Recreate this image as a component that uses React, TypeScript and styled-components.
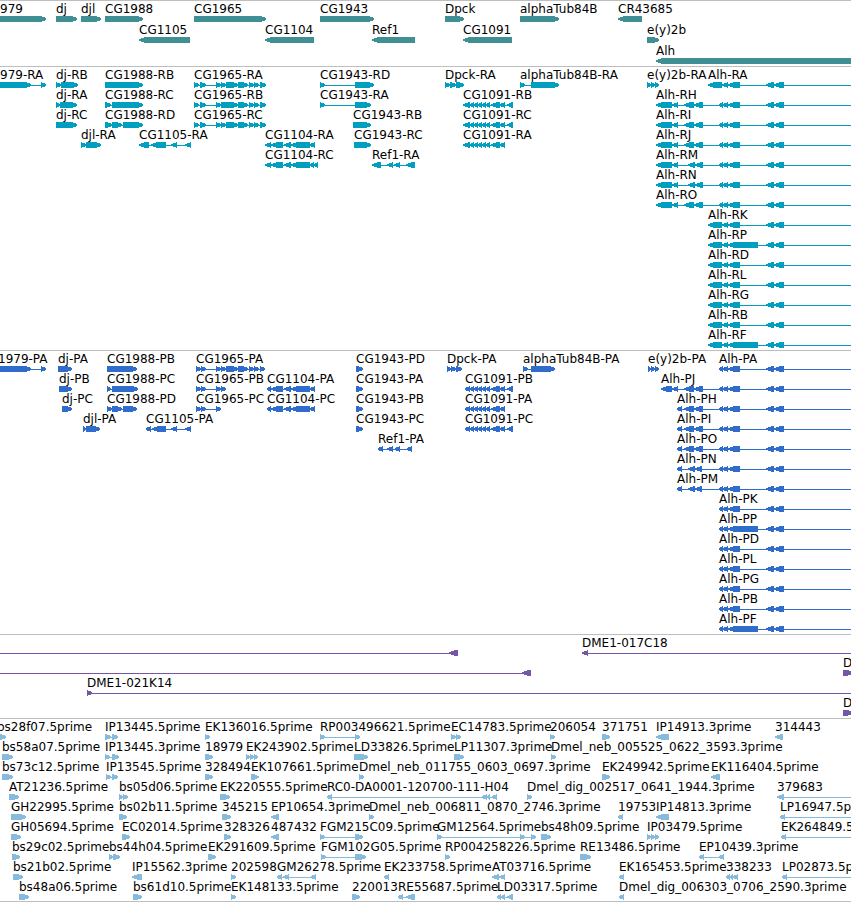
import React from "react";
import styled, { createGlobalStyle } from "styled-components";

const GlobalStyle = createGlobalStyle`
  body {
    margin: 0;
    background: #ffffff;
    color: #000000;
    font-family: "DejaVu Sans", Verdana, sans-serif;
    font-size: 12px;
  }
`;

const Browser = styled.main`
  overflow: hidden;
  border-bottom: 1px solid #bebebe;
`;

const Track = styled.section<{ $color: string; $gap?: number; $end?: number }>`
  display: flex;
  flex-direction: column;
  gap: ${(p) => p.$gap ?? 0}px;
  padding: 1px 0 ${(p) => p.$end ?? 2}px;
  border-top: 1px solid #bebebe;
  color: ${(p) => p.$color};
`;

const Lane = styled.div`
  position: relative;
  height: 20px;
`;

/* A feature sits at its own place along the sequence. */
const FeatureBox = styled.div`
  position: absolute;
  top: 0;
  display: flex;
  flex-direction: column;
`;

const Label = styled.span`
  height: 14px;
  line-height: 14px;
  color: #000000;
  white-space: nowrap;
`;

const Glyph = styled.svg`
  display: block;
  height: 6px;
  fill: currentColor;
  shape-rendering: crispEdges;
`;

type Strand = "+" | "-";
/* name, strand, [start, end, start, end, ...], where the line ends, where it starts */
type FeatureData = [string, Strand, number[], number?, number?];

const EDGE = 2400;
const HEAD = 6;

function exonPoints(start: number, end: number, strand: Strand) {
  const head = Math.min(HEAD, end - start);
  return strand === "+"
    ? `${start},0 ${end - head},0 ${end},2 ${end},4 ${end - head},6 ${start},6`
    : `${end},0 ${start + head},0 ${start},2 ${start},4 ${start + head},6 ${end},6`;
}

function Feature({ data }: { data: FeatureData }) {
  const [name, strand, spans, lineEnd, lineStart] = data;
  const start = lineStart ?? spans[0];
  const end = lineEnd ?? spans[spans.length - 1];
  const exons: [number, number][] = [];
  for (let i = 0; i < spans.length; i += 2) {
    exons.push([spans[i] - start, spans[i + 1] - start]);
  }
  const hasLine = exons.length > 1 || lineEnd !== undefined || lineStart !== undefined;
  return (
    <FeatureBox style={{ left: start }}>
      <Label>{name}</Label>
      <Glyph width={end - start} height={6} aria-hidden="true">
        {hasLine && <rect x={1} y={3} width={end - start - 2} height={1} />}
        {exons.map(([a, b]) => (
          <polygon key={a} points={exonPoints(a, b, strand)} />
        ))}
      </Glyph>
    </FeatureBox>
  );
}

const genes: FeatureData[][] = [
  [
    ["979", "+", [0, 46]],
    ["dj", "+", [56, 77]],
    ["djl", "+", [81, 101]],
    ["CG1988", "+", [105, 143]],
    ["CG1965", "+", [194, 266]],
    ["CG1943", "+", [320, 374]],
    ["Dpck", "+", [445, 464]],
    ["alphaTub84B", "+", [520, 559]],
    ["CR43685", "-", [618, 642]],
  ],
  [
    ["CG1105", "-", [139, 190]],
    ["CG1104", "-", [265, 314]],
    ["Ref1", "-", [372, 415]],
    ["CG1091", "-", [463, 512]],
    ["e(y)2b", "+", [647, 659]],
  ],
  [["Alh", "-", [656, EDGE]]],
];

const alhCore = [719, 723, 723, 728, 728, 740, 766, 774, 774, 784];
const alhLongCore = [719, 723, 723, 728, 728, 758, 766, 774, 774, 784];
const alhShort = [708, 722, 722, 728, 728, 740, 766, 774, 774, 784];
const alhShortLong = [708, 722, 722, 728, 728, 758, 766, 774, 774, 784];
const alhWide = [656, 672, 672, 678, 684, 694, 694, 703, ...alhCore];
const alhNarrow = [656, 672, 672, 678, 688, 695, 695, 703, ...alhCore];
const cg1965Tail = [238, 248, 249, 254, 254, 259, 260, 266];
const cg1104Mid = [271, 283, 284, 291, 291, 310];
const cg1091Mid = [470, 474, 474, 478, 478, 482, 482, 486, 486, 490, 491, 500, 500, 505];

const transcripts: FeatureData[][] = [
  [
    ["979-RA", "+", [0, 31, 41, 46]],
    ["dj-RB", "+", [56, 61, 61, 78]],
    ["CG1988-RB", "+", [105, 143]],
    ["CG1965-RA", "+", [194, 199, 200, 206, 216, 221, 221, 226, 226, 238, ...cg1965Tail]],
    ["CG1943-RD", "+", [320, 325, 355, 374]],
    ["Dpck-RA", "+", [445, 450, 450, 456, 456, 464]],
    ["alphaTub84B-RA", "+", [520, 525, 531, 559]],
    ["e(y)2b-RA", "+", [647, 651, 651, 655, 655, 659]],
    ["Alh-RA", "-", alhShort, EDGE],
  ],
  [
    ["dj-RA", "+", [56, 60, 60, 77]],
    ["CG1988-RC", "+", [105, 111, 112, 143]],
    ["CG1965-RB", "+", [194, 199, 200, 206, 216, 221, 221, 238, ...cg1965Tail]],
    ["CG1943-RA", "+", [320, 325, 355, 371]],
    ["CG1091-RB", "-", [463, 470, ...cg1091Mid, 507, 513]],
    ["Alh-RH", "-", alhWide, EDGE],
  ],
  [
    ["dj-RC", "+", [56, 77]],
    ["CG1988-RD", "+", [105, 112, 112, 122, 123, 143]],
    ["CG1965-RC", "+", [194, 199, 200, 206, 216, 221, 221, 226, 226, 238, ...cg1965Tail]],
    ["CG1943-RB", "+", [353, 371]],
    ["CG1091-RC", "-", [463, 470, ...cg1091Mid, 507, 513]],
    ["Alh-RI", "-", alhWide, EDGE],
  ],
  [
    ["djl-RA", "+", [81, 86, 86, 101]],
    ["CG1105-RA", "-", [139, 149, 151, 166, 171, 177, 185, 191]],
    ["CG1104-RA", "-", [265, 271, ...cg1104Mid, 310, 315]],
    ["CG1943-RC", "+", [354, 371]],
    ["CG1091-RA", "-", [463, 470, ...cg1091Mid]],
    ["Alh-RJ", "-", alhWide, EDGE],
  ],
  [
    ["CG1104-RC", "-", [265, 271, ...cg1104Mid, 310, 314, 314, 318]],
    ["Ref1-RA", "-", [372, 381, 387, 393, 394, 400, 406, 415]],
    ["Alh-RM", "-", alhNarrow, EDGE],
  ],
  [["Alh-RN", "-", alhNarrow, EDGE]],
  [["Alh-RO", "-", alhWide, EDGE]],
  [["Alh-RK", "-", alhShort, EDGE]],
  [["Alh-RP", "-", alhShortLong, EDGE]],
  [["Alh-RD", "-", alhShort, EDGE]],
  [["Alh-RL", "-", alhShort, EDGE]],
  [["Alh-RG", "-", alhShort, EDGE]],
  [["Alh-RB", "-", alhShort, EDGE]],
  [["Alh-RF", "-", alhShortLong, EDGE]],
];

const alhPH = [677, 682, 684, 694, 694, 703, ...alhCore];
const alhPN = [677, 682, 688, 695, 695, 702, ...alhCore];

const proteins: FeatureData[][] = [
  [
    ["1979-PA", "+", [-2, 31, 41, 46]],
    ["dj-PA", "+", [58, 72]],
    ["CG1988-PB", "+", [107, 137]],
    ["CG1965-PA", "+", [196, 201, 201, 206, 216, 221, 221, 226, 226, 238, 238, 248, 249, 254, 254, 259, 260, 265]],
    ["CG1943-PD", "+", [356, 363]],
    ["Dpck-PA", "+", [447, 451, 451, 456, 456, 462]],
    ["alphaTub84B-PA", "+", [523, 528, 531, 555]],
    ["e(y)2b-PA", "+", [648, 651, 651, 655, 655, 659]],
    ["Alh-PA", "-", alhCore, EDGE],
  ],
  [
    ["dj-PB", "+", [59, 72]],
    ["CG1988-PC", "+", [107, 111, 112, 138]],
    ["CG1965-PB", "+", [196, 201, 201, 206, 216, 221, 221, 226]],
    ["CG1104-PA", "-", [267, 271, ...cg1104Mid, 310, 315]],
    ["CG1943-PA", "+", [356, 363]],
    ["CG1091-PB", "-", [465, 470, ...cg1091Mid, 507, 513]],
    ["Alh-PJ", "-", [661, 672, 672, 678, 684, 694, 694, 703, ...alhCore], EDGE],
  ],
  [
    ["dj-PC", "+", [62, 72]],
    ["CG1988-PD", "+", [107, 112, 112, 122, 123, 137]],
    ["CG1965-PC", "+", [196, 201, 201, 206, 216, 221]],
    ["CG1104-PC", "-", [267, 271, ...cg1104Mid, 310, 315]],
    ["CG1943-PB", "+", [356, 363]],
    ["CG1091-PA", "-", [465, 470, ...cg1091Mid]],
    ["Alh-PH", "-", alhPH, EDGE],
  ],
  [
    ["djl-PA", "+", [83, 86, 86, 100]],
    ["CG1105-PA", "-", [146, 151, 152, 166, 171, 177, 185, 191]],
    ["CG1943-PC", "+", [356, 363]],
    ["CG1091-PC", "-", [465, 470, ...cg1091Mid, 507, 513]],
    ["Alh-PI", "-", alhPH, EDGE],
  ],
  [
    ["Ref1-PA", "-", [378, 383, 387, 393, 395, 400, 407, 412]],
    ["Alh-PO", "-", alhPH, EDGE],
  ],
  [["Alh-PN", "-", alhPN, EDGE]],
  [["Alh-PM", "-", alhPN, EDGE]],
  [["Alh-PK", "-", alhCore, EDGE]],
  [["Alh-PP", "-", alhLongCore, EDGE]],
  [["Alh-PD", "-", alhCore, EDGE]],
  [["Alh-PL", "-", alhCore, EDGE]],
  [["Alh-PG", "-", alhCore, EDGE]],
  [["Alh-PB", "-", alhCore, EDGE]],
  [["Alh-PF", "-", alhLongCore, EDGE]],
];

const clones: FeatureData[][] = [
  [
    ["", "-", [449, 458], 458, -20],
    ["DME1-017C18", "-", [582, 588], EDGE],
  ],
  [
    ["", "-", [522, 531], 531, -20],
    ["D", "+", [843, 853]],
  ],
  [["DME1-021K14", "+", [87, 92], EDGE]],
  [["D", "+", [843, 853]]],
];

const ests: FeatureData[][] = [
  [
    ["bs28f07.5prime", "+", [-3, 6]],
    ["IP13445.5prime", "+", [105, 111, 112, 118]],
    ["EK136016.5prime", "+", [205, 210]],
    ["RP003496621.5prime", "+", [320, 325, 355, 360]],
    ["EC14783.5prime", "+", [451, 456, 456, 461]],
    ["206054", "+", [550, 555]],
    ["371751", "+", [602, 610]],
    ["IP14913.3prime", "-", [656, 669]],
    ["314443", "-", [775, 783]],
  ],
  [
    ["bs58a07.5prime", "+", [2, 13]],
    ["IP13445.3prime", "+", [105, 110, 112, 119]],
    ["18979", "+", [205, 213]],
    ["EK243902.5prime", "+", [246, 250, 250, 254, 254, 258]],
    ["LD33826.5prime", "+", [354, 368]],
    ["LP11307.3prime", "+", [454, 464]],
    ["Dmel_neb_005525_0622_3593.3prime", "+", [551, 556]],
  ],
  [
    ["bs73c12.5prime", "+", [2, 13]],
    ["IP13545.5prime", "+", [106, 111, 112, 118]],
    ["328494", "+", [205, 213]],
    ["EK107661.5prime", "+", [251, 259]],
    ["Dmel_neb_011755_0603_0697.3prime", "+", [359, 364]],
    ["EK249942.5prime", "+", [602, 610]],
    ["EK116404.5prime", "-", [711, 720]],
  ],
  [
    ["AT21236.5prime", "+", [9, 19]],
    ["bs05d06.5prime", "+", [119, 123, 123, 128]],
    ["EK220555.5prime", "+", [220, 230]],
    ["RC0-DA0001-120700-111-H04", "-", [327, 332, 482, 487, 487, 490, 492, 497]],
    ["Dmel_dig_002517_0641_1944.3prime", "+", [527, 532]],
    ["379683", "-", [777, 784], EDGE],
  ],
  [
    ["GH22995.5prime", "+", [11, 26]],
    ["bs02b11.5prime", "+", [119, 127]],
    ["345215", "+", [222, 231]],
    ["EP10654.3prime", "-", [271, 279]],
    ["Dmel_neb_006811_0870_2746.3prime", "+", [369, 374]],
    ["19753", "-", [618, 623]],
    ["IP14813.3prime", "-", [656, 669]],
    ["LP16947.5prime", "-", [780, 785], EDGE],
  ],
  [
    ["GH05694.5prime", "+", [11, 21]],
    ["EC02014.5prime", "+", [122, 130]],
    ["328326", "+", [224, 231]],
    ["487432", "-", [271, 279]],
    ["FGM215C09.5prime", "+", [320, 325, 355, 363]],
    ["GM12564.5prime", "+", [437, 442, 520, 525, 531, 536]],
    ["bs48h09.5prime", "+", [541, 551]],
    ["IP03479.5prime", "+", [647, 651, 651, 655, 655, 659]],
    ["EK264849.5prime", "-", [781, 786], EDGE],
  ],
  [
    ["bs29c02.5prime", "+", [12, 20]],
    ["bs44h04.5prime", "+", [109, 113, 113, 120]],
    ["EK291609.5prime", "+", [208, 216]],
    ["FGM102G05.5prime", "+", [321, 326, 355, 366]],
    ["RP004258226.5prime", "+", [445, 450]],
    ["RE13486.5prime", "+", [580, 591]],
    ["EP10439.3prime", "-", [699, 704, 719, 724]],
  ],
  [
    ["bs21b02.5prime", "+", [13, 23]],
    ["IP15562.3prime", "-", [132, 142]],
    ["202598", "+", [231, 236]],
    ["GM26278.5prime", "-", [277, 282, 283, 289, 311, 316]],
    ["EK233758.5prime", "-", [384, 389]],
    ["AT03716.5prime", "-", [492, 499, 499, 505]],
    ["EK165453.5prime", "-", [619, 624]],
    ["338233", "-", [726, 730, 730, 733, 733, 738]],
    ["LP02873.5prime", "-", [782, 787], EDGE],
  ],
  [
    ["bs48a06.5prime", "+", [19, 29]],
    ["bs61d10.5prime", "+", [133, 142]],
    ["EK148133.5prime", "+", [231, 236]],
    ["220013", "+", [352, 360]],
    ["RE55687.5prime", "-", [398, 403, 406, 415]],
    ["LD03317.5prime", "-", [497, 501, 501, 505, 507, 513]],
    ["Dmel_dig_006303_0706_2590.3prime", "-", [619, 624]],
  ],
];

function Lanes({ lanes }: { lanes: FeatureData[][] }) {
  return (
    <>
      {lanes.map((features, lane) => (
        <Lane key={lane}>
          {features.map((data, i) => (
            <Feature key={i} data={data} />
          ))}
        </Lane>
      ))}
    </>
  );
}

export default function App() {
  return (
    <>
      <GlobalStyle />
      <Browser>
        <Track $color="#3f8f94" $gap={1} aria-label="Genes">
          <Lanes lanes={genes} />
        </Track>
        <Track $color="#009fc0" aria-label="Transcripts">
          <Lanes lanes={transcripts} />
        </Track>
        <Track $color="#306ccc" aria-label="Proteins">
          <Lanes lanes={proteins} />
        </Track>
        <Track $color="#7556a8" aria-label="Clones">
          <Lanes lanes={clones} />
        </Track>
        <Track $color="#87bbdd" $end={1} aria-label="Sequence tags">
          <Lanes lanes={ests} />
        </Track>
      </Browser>
    </>
  );
}
